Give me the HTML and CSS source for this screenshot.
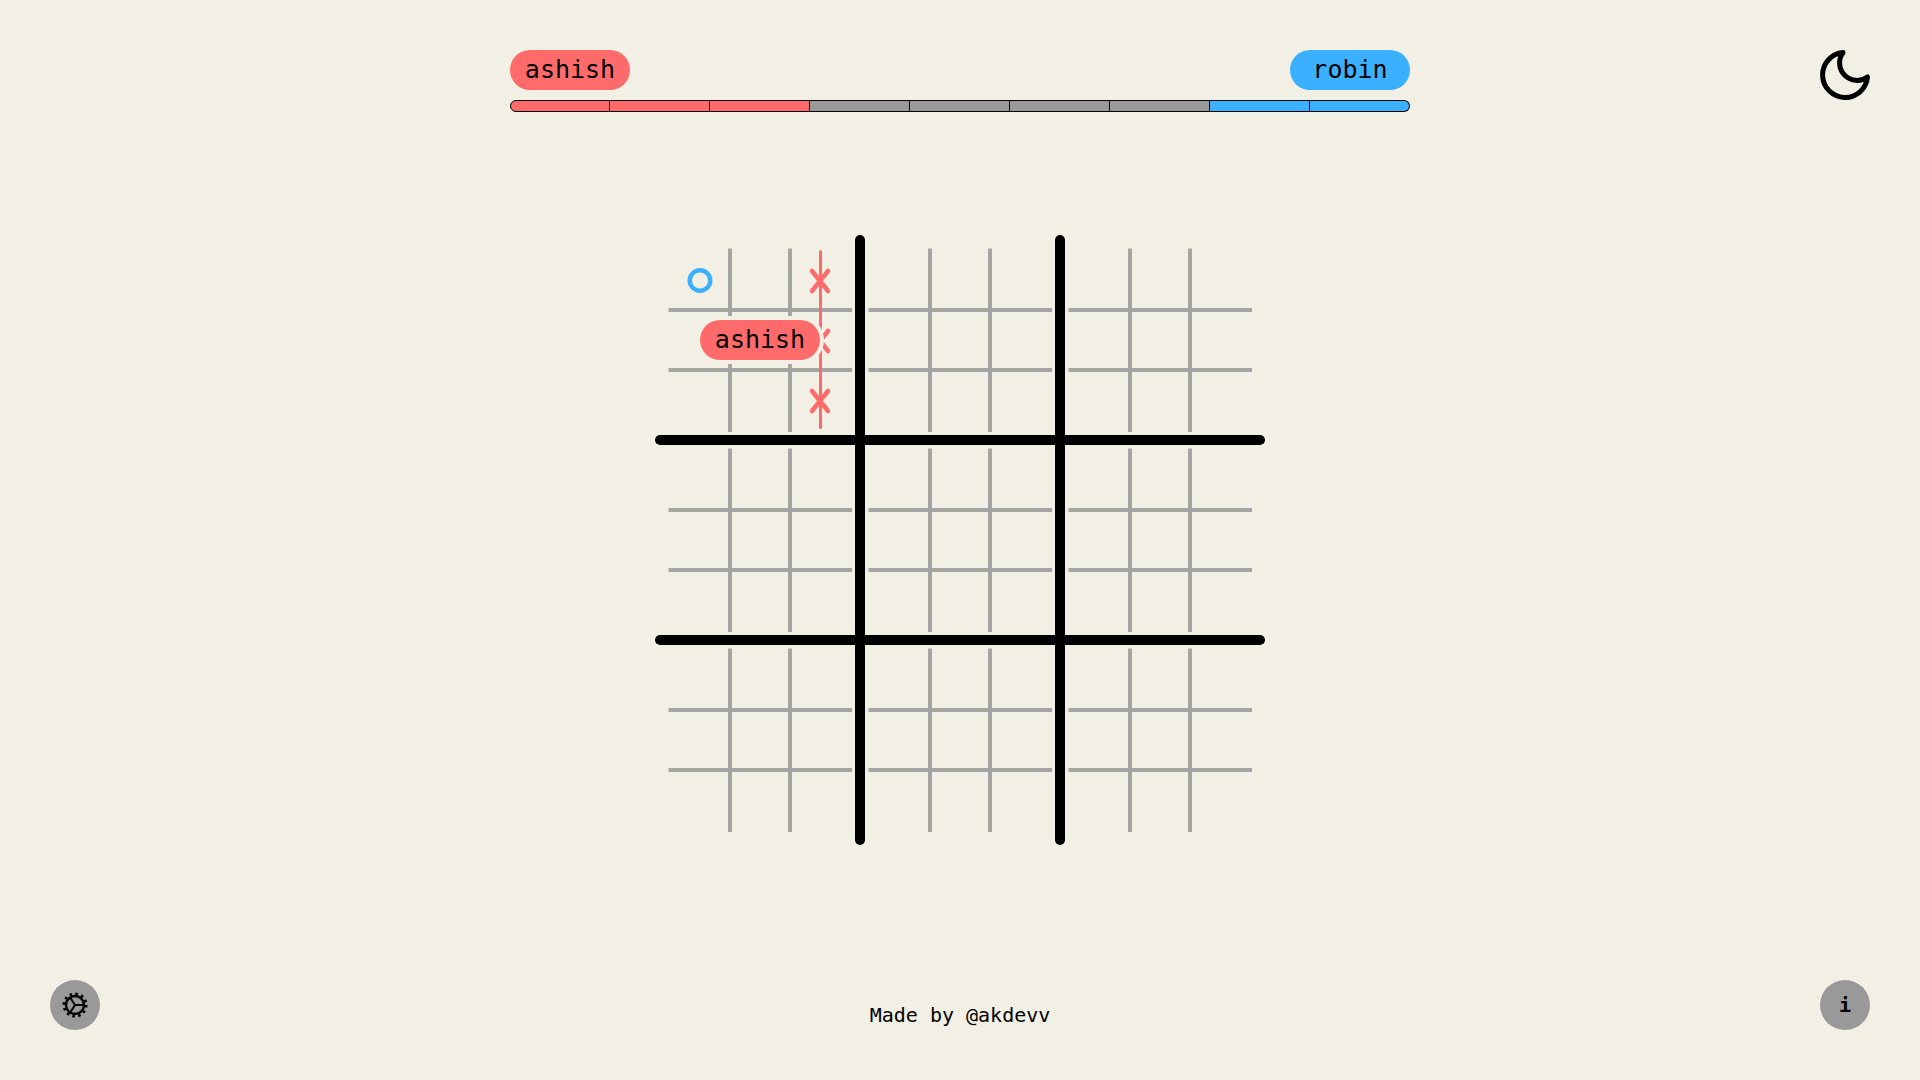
FILE: index.html
```html
<!DOCTYPE html>
<html lang="en">

<head>
  <meta charset="UTF-8">
  <meta name="viewport" content="width=device-width, initial-scale=1.0">
  <title>Ultimate Tic Tac Toe</title>
  <link rel="stylesheet" href="styles.css">
</head>

<body>
  <header class="score">
    <div class="players">
      <span class="tag tag-x">ashish</span>
      <span class="tag tag-o">robin</span>
    </div>
    <div class="bar">
      <span class="seg seg-x"></span>
      <span class="seg seg-x"></span>
      <span class="seg seg-x"></span>
      <span class="seg"></span>
      <span class="seg"></span>
      <span class="seg"></span>
      <span class="seg"></span>
      <span class="seg seg-o"></span>
      <span class="seg seg-o"></span>
    </div>
  </header>

  <button class="theme" aria-label="theme">
    <svg viewBox="0 0 24 24" width="60" height="60" fill="none" stroke="#000" stroke-width="2" stroke-linecap="round" stroke-linejoin="round">
      <path d="M21 12.79A9 9 0 1 1 11.21 3 7 7 0 0 0 21 12.79z"></path>
    </svg>
  </button>

  <main class="board-wrap">
    <svg class="board" viewBox="0 0 610 610" width="610" height="610">
      <defs>
        <g id="small" class="small">
          <line x1="70" y1="8.5" x2="70" y2="192"></line>
          <line x1="130" y1="8.5" x2="130" y2="192"></line>
          <line x1="8.5" y1="70" x2="192" y2="70"></line>
          <line x1="8.5" y1="130" x2="192" y2="130"></line>
        </g>
      </defs>
      <g transform="translate(5 5)">
        <use href="#small"></use>
        <use href="#small" x="200"></use>
        <use href="#small" x="400"></use>
        <use href="#small" y="200"></use>
        <use href="#small" x="200" y="200"></use>
        <use href="#small" x="400" y="200"></use>
        <use href="#small" y="400"></use>
        <use href="#small" x="200" y="400"></use>
        <use href="#small" x="400" y="400"></use>
        <g class="big">
          <line x1="200" y1="0" x2="200" y2="600"></line>
          <line x1="400" y1="0" x2="400" y2="600"></line>
          <line x1="0" y1="200" x2="600" y2="200"></line>
          <line x1="0" y1="400" x2="600" y2="400"></line>
        </g>
        <circle class="mark-o" cx="40" cy="40.5" r="10.25"></circle>
        <g class="mark-x">
          <path d="M152 31 168 51M168 31 152 51"></path>
          <path d="M152 91 168 111M168 91 152 111"></path>
          <path d="M152 151 168 171M168 151 152 171"></path>
        </g>
        <line class="win" x1="160.5" y1="11.5" x2="160.5" y2="187.5"></line>
      </g>
    </svg>
    <span class="tag tag-x tag-float">ashish</span>
  </main>

  <button class="round round-left" aria-label="settings">
    <svg class="gear" viewBox="0 0 26 26" width="26" height="26" fill="none" stroke="#000">
      <circle cx="13" cy="13" r="11.2" stroke-width="2.6" stroke-dasharray="2.6 3.26"></circle>
      <circle cx="13" cy="13" r="9" stroke-width="2.4"></circle>
      <path stroke-width="2" d="M13 13H21M13 13 8.5 6M13 13 8.5 20"></path>
    </svg>
  </button>
  <footer class="credit">Made by @akdevv</footer>
  <button class="round round-right" aria-label="info">i</button>
</body>

</html>
```

FILE: styles.css
```css
* {
  box-sizing: border-box;
}

html,
body {
  height: 100%;
}

body {
  margin: 0;
  height: 1080px;
  overflow: hidden;
  position: relative;
  background-color: #f2efe5;
  color: #000;
  font-family: "DejaVu Sans Mono", monospace;
}

.score {
  width: 900px;
  margin: 0 auto;
  padding-top: 50px;
}

.players {
  display: flex;
  justify-content: space-between;
}

.tag {
  display: flex;
  align-items: center;
  justify-content: center;
  width: 120px;
  height: 40px;
  padding-bottom: 2px;
  border-radius: 20px;
  font-size: 25px;
}

.tag-x {
  background-color: #ff6b6b;
}

.tag-o {
  background-color: #3ab0ff;
}

.bar {
  display: flex;
  height: 12px;
  margin-top: 10px;
}

.seg {
  flex: 0 0 100px;
  background-color: #999;
  border: 1px solid #000;
  border-left: 0;
}

.seg:first-child {
  border-left: 1px solid #000;
  border-radius: 6px 0 0 6px;
}

.seg:last-child {
  border-radius: 0 6px 6px 0;
}

.seg-x {
  background-color: #ff6b6b;
}

.seg-o {
  background-color: #3ab0ff;
}

.theme {
  position: absolute;
  top: 45px;
  right: 45px;
  padding: 0;
  border: 0;
  background: none;
  line-height: 0;
}

.board-wrap {
  position: absolute;
  top: 235px;
  left: 655px;
  width: 610px;
  height: 610px;
}

.board {
  display: block;
}

.small line {
  stroke: #a5a5a3;
  stroke-width: 4;
}

.big line {
  stroke: #000;
  stroke-width: 10;
  stroke-linecap: round;
}

.mark-o {
  fill: none;
  stroke: #3ab0ff;
  stroke-width: 4.5;
}

.mark-x {
  fill: none;
  stroke: #ff6b6b;
  stroke-width: 4.5;
  stroke-linecap: round;
}

.win {
  stroke: #ff6b6b;
  stroke-width: 3;
  stroke-linecap: round;
}

.tag-float {
  position: absolute;
  top: 85px;
  left: 45px;
  box-shadow: 0 0 0 4px #f2efe5;
}

.round {
  position: absolute;
  bottom: 50px;
  display: flex;
  align-items: center;
  justify-content: center;
  width: 50px;
  height: 50px;
  padding: 0;
  border: 0;
  border-radius: 50%;
  background-color: #999;
  color: #000;
  font-family: "DejaVu Sans Mono", monospace;
}

.round-left {
  left: 50px;
}

.round-right {
  right: 50px;
  font-size: 20px;
  font-weight: bold;
}

.credit {
  position: absolute;
  bottom: 53px;
  left: 0;
  width: 100%;
  text-align: center;
  font-size: 20px;
}
```
